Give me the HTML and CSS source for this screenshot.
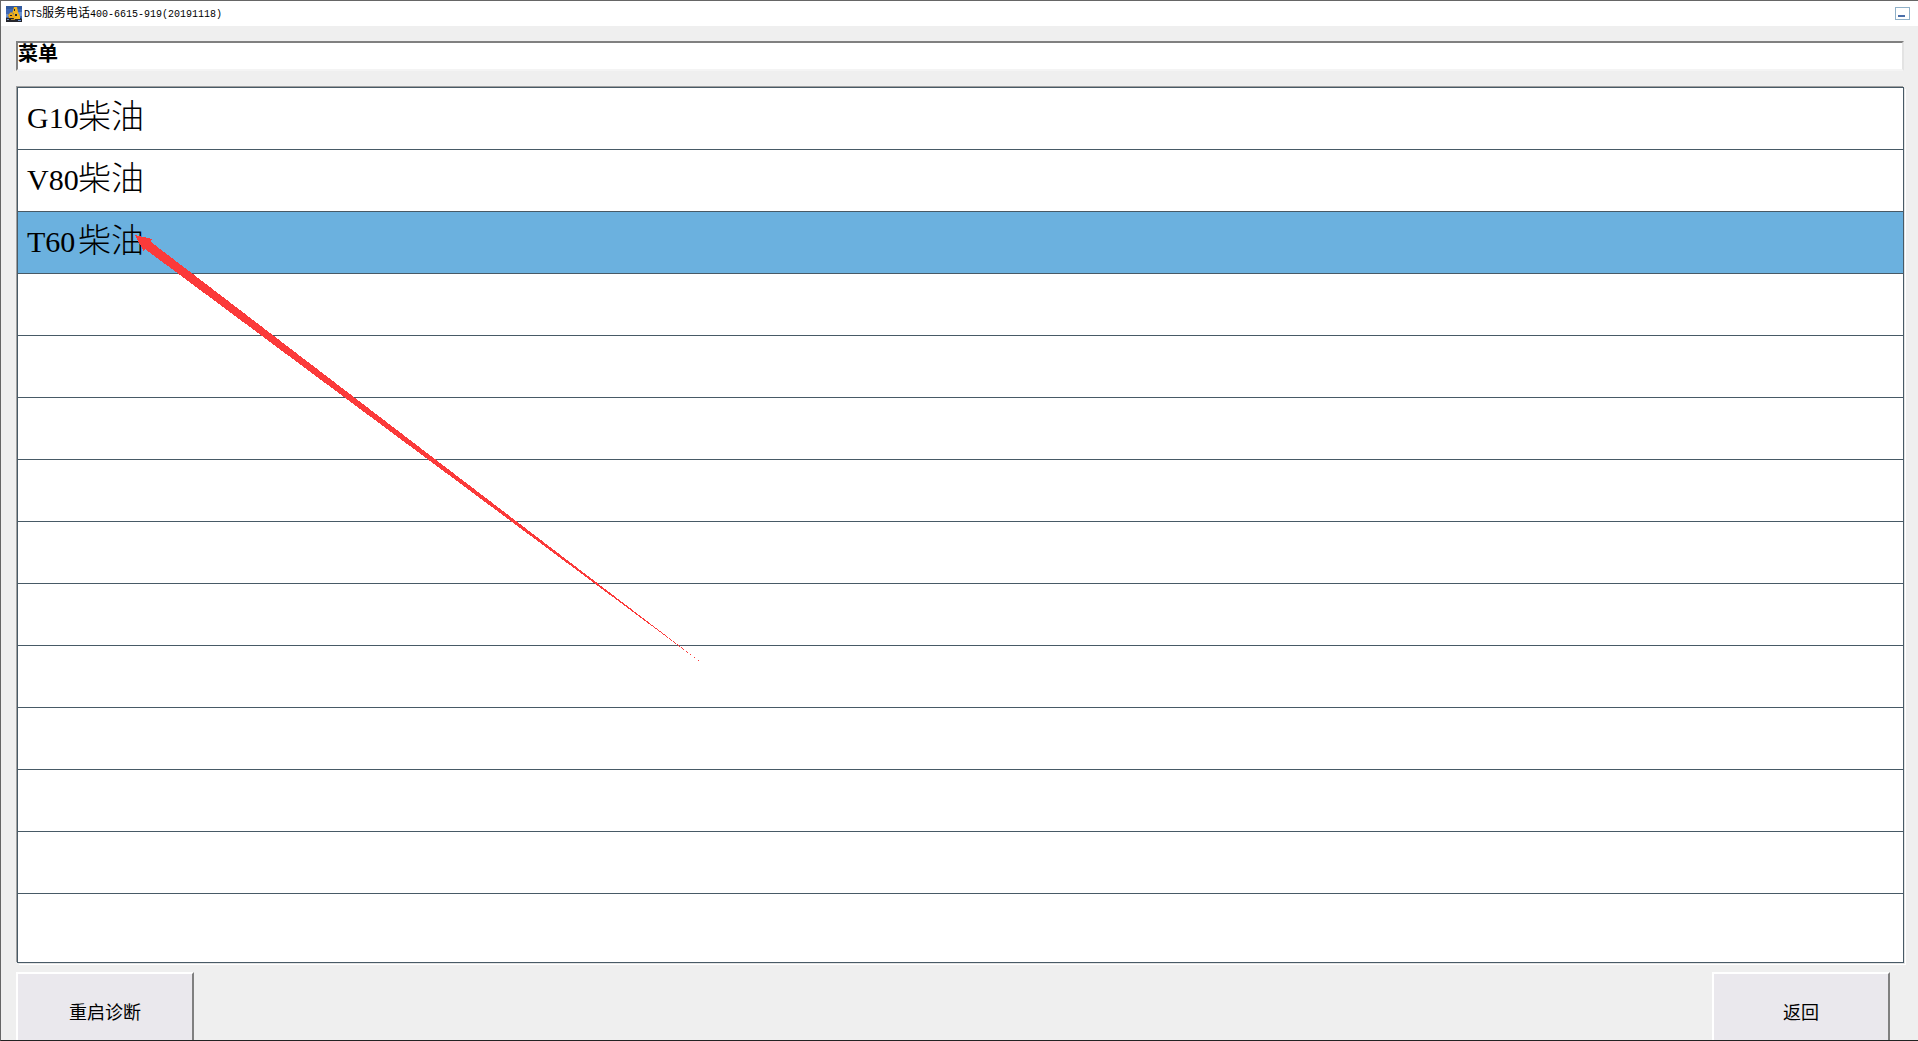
FILE: index.html
```html
<!DOCTYPE html>
<html lang="zh-CN">
<head>
  <title>DTS服务电话400-6615-919(20191118)</title>
  <meta charset="utf-8" />
  <link rel="stylesheet" href="styles.css">
</head>
<body>
  <header class="title-bar">
    <svg class="app-icon" viewBox="0 0 16 16" aria-hidden="true">
      <rect width="16" height="16" fill="#3f68b5" />
      <path d="M0 0h16v3H0z" fill="#315a9e" />
      <path d="M0 12h3v-2h3v1h7l3 2v3H0z" fill="#25262c" />
      <path d="M0 8h2v3H0zM12 6h4v4h-2zM1 13h2v1H1zM12 14h3v1h-3z" fill="#6f93d0" />
      <path d="M8 1h3l1 5 2 4v3H8l-1-3 1-3-2 1z" fill="#f2b51d" />
      <path d="M2 9l3-3 2 2 2 2v2H3z" fill="#e8a81a" />
      <path d="M8 3h1v2H8zM4 9h2v1H4zM9 8h2v2H9z" fill="#20242e" />
      <path d="M5 13h4v1H5z" fill="#b98a20" />
    </svg>
    <span class="title">DTS<b>服务电话</b>400-6615-919(20191118)</span>
    <button class="minimize" type="button" aria-label="最小化"></button>
  </header>

  <main class="content">
    <input class="path" type="text" value="菜单" aria-label="当前位置" readonly>

    <ul class="menu">
      <li><span>G10</span>柴油</li>
      <li><span>V80</span>柴油</li>
      <li class="selected"><span>T60</span>柴油</li>
      <li></li>
      <li></li>
      <li></li>
      <li></li>
      <li></li>
      <li></li>
      <li></li>
      <li></li>
      <li></li>
      <li></li>
    </ul>
  </main>

  <footer class="actions">
    <button type="button">重启诊断</button>
    <button type="button">返回</button>
  </footer>

  <svg class="arrow" viewBox="0 0 580 438" aria-hidden="true">
    <path d="M0 0L17 4L16 7L576 435L10 14L9 17z" fill="#fb3a3a" shape-rendering="crispEdges" />
  </svg>
</body>
</html>
```
FILE: styles.css
```css
* {
  box-sizing: border-box;
}

body {
  display: flex;
  flex-direction: column;
  position: relative;
  height: 100vh;
  margin: 0;
  overflow: hidden;
  background: #efefef;
  border: 1px solid #666;
  border-right: 0;
  border-bottom-color: #222;
  color: #000;
  font-family: "Liberation Serif", "Noto Sans CJK SC", serif;
}

.title-bar {
  display: flex;
  flex: none;
  align-items: center;
  height: 25px;
  padding: 0 8px 0 5px;
  background: #fff;
}

.app-icon {
  width: 16px;
  height: 16px;
}

.title {
  margin-left: 2px;
  padding-top: 1px;
  font: 10px/16px "Liberation Mono", "Noto Sans CJK SC", monospace;
}

.title b {
  font-size: 12px;
  font-weight: 400;
}

.minimize {
  position: relative;
  width: 15px;
  height: 13px;
  margin-left: auto;
  padding: 0;
  background: #fff;
  border: 1px solid #8fb0c8;
}

.minimize::after {
  content: "";
  position: absolute;
  left: 2px;
  bottom: 2px;
  width: 7px;
  height: 2px;
  background: #4a6ea9;
}

.content {
  display: flex;
  flex: 1;
  flex-direction: column;
  gap: 15px;
  min-height: 0;
  padding: 15px 13px 9px 15px;
}

.path {
  height: 30px;
  margin-right: 1px;
  padding: 0 0 8px;
  background: #fff;
  border: 2px solid;
  border-color: #808080 #e3e3e3 #f4f4f4 #808080;
  color: #000;
  font: bold 20px/20px "Noto Sans CJK SC", sans-serif;
  outline: 0;
}

.menu {
  flex: 1;
  margin: 1px 1px 0;
  padding: 0;
  list-style: none;
  background: #fff;
  border: 1px solid #485a66;
  box-shadow: -1px -1px #a0a0a0, 1px 1px #e3e3e3, 2px 2px #fff;
}

.menu li {
  height: 62px;
  padding-left: 9px;
  border-bottom: 1px solid #485a66;
  font-size: 33px;
  font-weight: 300;
  line-height: 58px;
}

.menu span {
  display: inline-block;
  width: 51px;
  font-size: 30px;
}

.menu .selected {
  background: #6bb1df;
}

/* buttons run past the bottom edge of the window */
.actions {
  display: flex;
  flex: none;
  justify-content: space-between;
  align-items: flex-start;
  height: 68px;
  padding: 0 28px 0 15px;
  overflow: hidden;
}

.actions button {
  flex: none;
  width: 178px;
  height: 78px;
  background: #eae8ed;
  border: 2px solid;
  border-color: #fff #808080 #808080 #fff;
  color: #000;
  font: 18px/20px "Noto Sans CJK SC", sans-serif;
}

.arrow {
  position: absolute;
  top: 234px;
  left: 134px;
  width: 580px;
  height: 438px;
  pointer-events: none;
}
```
